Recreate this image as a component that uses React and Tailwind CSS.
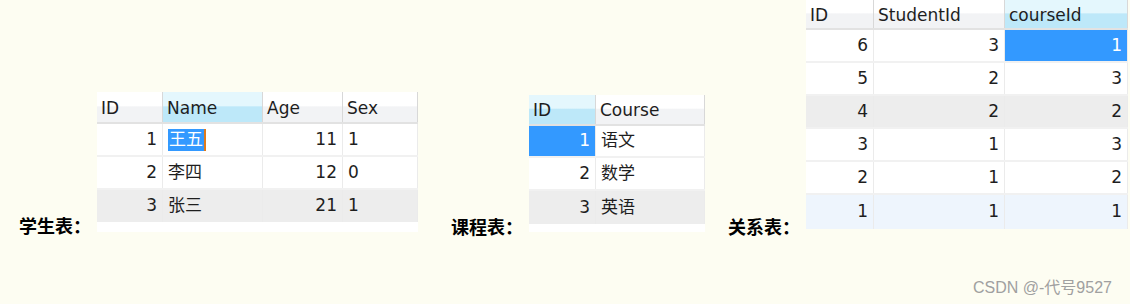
import React from "react";

const LAT = { fontFamily: '"DejaVu Sans", "Noto Sans CJK SC", sans-serif' };

function HeaderCell({ w, text, selected }) {
  return (
    <div
      className={`${w} h-full flex items-center pl-[4px] pt-[3px] border-r border-[#d8d8d8] text-[17px] text-[#1e1e1e] ${
        selected
          ? "bg-[linear-gradient(to_bottom,#e4f7fd_0%,#e4f7fd_45%,#bde8f9_50%,#bde8f9_100%)]"
          : "bg-[linear-gradient(to_bottom,#ffffff_0%,#ffffff_45%,#f2f3f5_50%,#f2f3f5_100%)]"
      }`}
    >
      {text}
    </div>
  );
}

function Cell({ w, children, right, sel }) {
  return (
    <div
      className={`${w} h-full flex items-center px-[5px] border-r border-[#ebebeb] text-[17px] ${
        right ? "justify-end" : "justify-start"
      } ${sel ? "bg-[#3399ff] text-white" : "text-[#1e1e1e]"}`}
    >
      {children}
    </div>
  );
}

function Label({ text }) {
  return (
    <div
      className="text-[18px] font-bold text-black leading-none whitespace-nowrap"
      style={{ fontFamily: '"Noto Sans CJK SC", sans-serif' }}
    >
      {text}
    </div>
  );
}

export default function App() {
  return (
    <div
      className="w-[1130px] h-[304px] bg-[#fdfdf2] flex items-start relative overflow-hidden"
      style={LAT}
    >
      {/* 学生表 */}
      <div className="flex items-end mt-[92px] ml-[19px] w-[399px] shrink-0">
        <div className="w-[78px] shrink-0 -mb-[2px]">
          <Label text="学生表：" />
        </div>
        <div className="w-[321px] bg-white flex flex-col">
          <div className="h-[32px] flex border-b-2 border-[#e2e2e2]">
            <HeaderCell w="w-[66px]" text="ID" />
            <HeaderCell w="w-[100px]" text="Name" selected />
            <HeaderCell w="w-[80px]" text="Age" />
            <HeaderCell w="w-[75px]" text="Sex" />
          </div>
          <div className="h-[33px] flex border-b-2 border-[#f1f1f1]">
            <Cell w="w-[66px]" right>1</Cell>
            <Cell w="w-[100px]">
              <span className="bg-[#3399ff] text-white px-[1px] h-[22px] flex items-center border-r-2 border-[#e07a1a]">
                王五
              </span>
            </Cell>
            <Cell w="w-[80px]" right>11</Cell>
            <Cell w="w-[75px]">1</Cell>
          </div>
          <div className="h-[33px] flex border-b-2 border-[#f1f1f1]">
            <Cell w="w-[66px]" right>2</Cell>
            <Cell w="w-[100px]">李四</Cell>
            <Cell w="w-[80px]" right>12</Cell>
            <Cell w="w-[75px]">0</Cell>
          </div>
          <div className="h-[32px] flex bg-[#ededed]">
            <Cell w="w-[66px]" right>3</Cell>
            <Cell w="w-[100px]">张三</Cell>
            <Cell w="w-[80px]" right>21</Cell>
            <Cell w="w-[75px]">1</Cell>
          </div>
          <div className="h-[10px] bg-white" />
        </div>
      </div>

      {/* 课程表 */}
      <div className="flex items-end mt-[95px] ml-[33px] shrink-0">
        <div className="w-[78px] shrink-0 -mb-[3px]">
          <Label text="课程表：" />
        </div>
        <div className="w-[176px] bg-white flex flex-col">
          <div className="h-[31px] flex border-b-2 border-[#e2e2e2]">
            <HeaderCell w="w-[67px]" text="ID" selected />
            <HeaderCell w="w-[109px]" text="Course" />
          </div>
          <div className="h-[32px] flex border-b-2 border-[#f1f1f1]">
            <Cell w="w-[67px]" right sel>1</Cell>
            <Cell w="w-[109px]">语文</Cell>
          </div>
          <div className="h-[33px] flex border-b-2 border-[#f1f1f1]">
            <Cell w="w-[67px]" right>2</Cell>
            <Cell w="w-[109px]">数学</Cell>
          </div>
          <div className="h-[33px] flex bg-[#ededed]">
            <Cell w="w-[67px]" right>3</Cell>
            <Cell w="w-[109px]">英语</Cell>
          </div>
          <div className="h-[8px] bg-white" />
        </div>
      </div>

      {/* 关系表 */}
      <div className="flex items-end ml-[23px] shrink-0">
        <div className="w-[78px] shrink-0 -mb-[6px]">
          <Label text="关系表：" />
        </div>
        <div className="w-[322px] bg-white flex flex-col">
          <div className="h-[30px] flex border-b-2 border-[#e2e2e2]">
            <HeaderCell w="w-[68px]" text="ID" />
            <HeaderCell w="w-[131px]" text="StudentId" />
            <HeaderCell w="w-[123px]" text="courseId" selected />
          </div>
          {[
            { r: ["6", "3", "1"], bg: "bg-white", sel: true, h: "h-[33px]" },
            { r: ["5", "2", "3"], bg: "bg-white", h: "h-[33px]" },
            { r: ["4", "2", "2"], bg: "bg-[#ededed]", h: "h-[33px]" },
            { r: ["3", "1", "3"], bg: "bg-white", h: "h-[33px]" },
            { r: ["2", "1", "2"], bg: "bg-white", h: "h-[33px]" },
            { r: ["1", "1", "1"], bg: "bg-[#eef5fd]", h: "h-[34px]", last: true },
          ].map((row, i) => (
            <div
              key={i}
              className={`${row.h} flex ${row.bg} ${
                row.last ? "" : "border-b-2 border-[#f1f1f1]"
              }`}
            >
              <Cell w="w-[68px]" right>{row.r[0]}</Cell>
              <Cell w="w-[131px]" right>{row.r[1]}</Cell>
              <Cell w="w-[123px]" right sel={row.sel}>{row.r[2]}</Cell>
            </div>
          ))}
        </div>
      </div>

      <div
        className="absolute left-[973px] top-[276px] text-[16px] text-[#a0a0a0] whitespace-nowrap"
        style={{ fontFamily: '"Liberation Sans", "Noto Sans CJK SC", sans-serif' }}
      >
        CSDN @-代号9527
      </div>
    </div>
  );
}
